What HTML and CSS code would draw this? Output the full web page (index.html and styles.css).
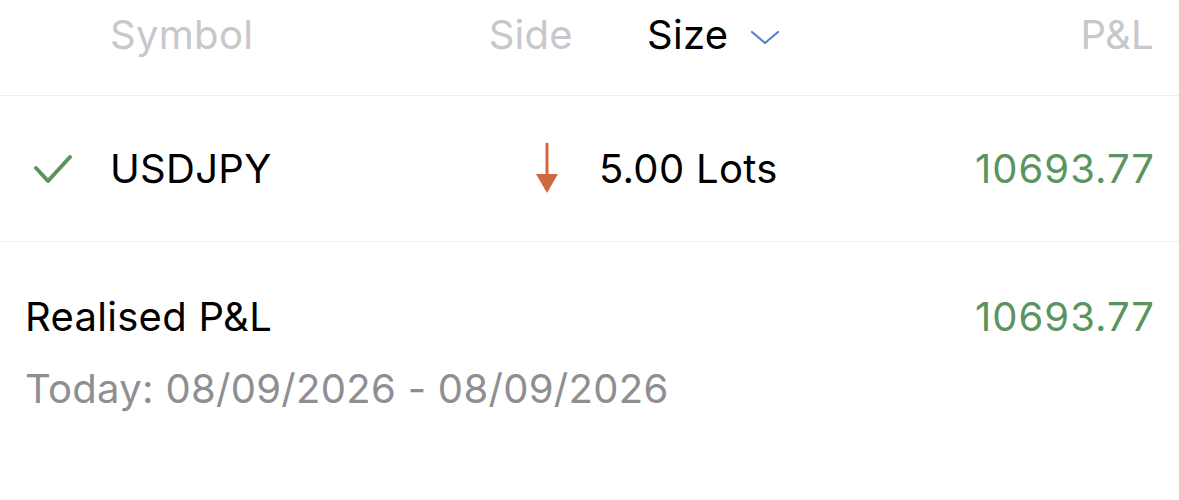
FILE: index.html
```html
<!DOCTYPE html>
<html>
<head>
<meta charset="utf-8">
<link rel="stylesheet" href="styles.css">
</head>
<body>
<div class="table">
  <div class="row head">
    <div class="c-icon"></div>
    <div class="h-sym">Symbol</div>
    <div class="h-side">Side</div>
    <div class="h-size">Size
      <svg class="chev" width="30" height="16" viewBox="0 0 30 16"><path d="M2 3 L15 14 L28 3" fill="none" stroke="#5b7fc7" stroke-width="2.2" stroke-linecap="round" stroke-linejoin="round"/></svg>
    </div>
    <div class="c-pl">P&amp;L</div>
  </div>
  <div class="row item">
    <div class="c-icon">
      <svg width="40" height="32" viewBox="0 0 40 32"><path d="M3 15 L15 28 L37 4" fill="none" stroke="#5a9460" stroke-width="4" stroke-linecap="round" stroke-linejoin="round"/></svg>
    </div>
    <div class="i-sym">USDJPY</div>
    <div class="i-side">
      <svg width="24" height="50" viewBox="0 0 24 50"><line x1="12" y1="0" x2="12" y2="33" stroke="#d0693f" stroke-width="3"/><path d="M1 31 L23 31 L12 50 Z" fill="#d0693f"/></svg>
    </div>
    <div class="i-size">5.00 Lots</div>
    <div class="c-pl green num">10693.77</div>
  </div>
</div>
<div class="summary">
  <div class="sum-top">
    <div class="sum-label">Realised P&amp;L</div>
    <div class="green num">10693.77</div>
  </div>
  <div class="sum-date">Today: 08/09/2026 - 08/09/2026</div>
</div>
</body>
</html>
```
FILE: styles.css
```css
html, body {
  margin: 0;
  padding: 0;
  background: #ffffff;
}
body {
  font-family: Inter, "Noto Sans", sans-serif;
  font-size: 40px;
  letter-spacing: 0.3px;
  color: #000000;
  width: 1179px;
}
.row {
  display: flex;
  align-items: center;
  padding-right: 25px;
  border-bottom: 1px solid #efefef;
  box-sizing: border-box;
}
.head {
  height: 96px;
  color: #c7c7cc;
  padding-bottom: 26px;
}
.item {
  height: 146px;
}
.c-icon {
  width: 110px;
  flex: none;
  display: flex;
  padding-left: 33px;
  box-sizing: border-box;
}
.h-sym {
  width: 350px;
}
.h-side {
  width: 113px;
  text-align: right;
}
.h-size {
  margin-left: 74px;
  flex: 1;
  display: flex;
  align-items: center;
  gap: 22px;
  color: #000000;
}
.chev {
  margin-top: 4px;
}
.i-sym {
  width: 410px;
}
.i-side {
  width: 79px;
  display: flex;
  padding-left: 15px;
  padding-bottom: 2px;
  box-sizing: border-box;
}
.i-size {
  flex: 1;
}
.c-pl {
  text-align: right;
}
.green {
  color: #5a9460;
}
.num {
  letter-spacing: 1px;
  margin-right: -1px;
}
.summary {
  padding: 50px 25px 0 25px;
}
.sum-top {
  display: flex;
  justify-content: space-between;
}
.sum-date {
  color: #8e8e93;
  margin-top: 23px;
}
```
